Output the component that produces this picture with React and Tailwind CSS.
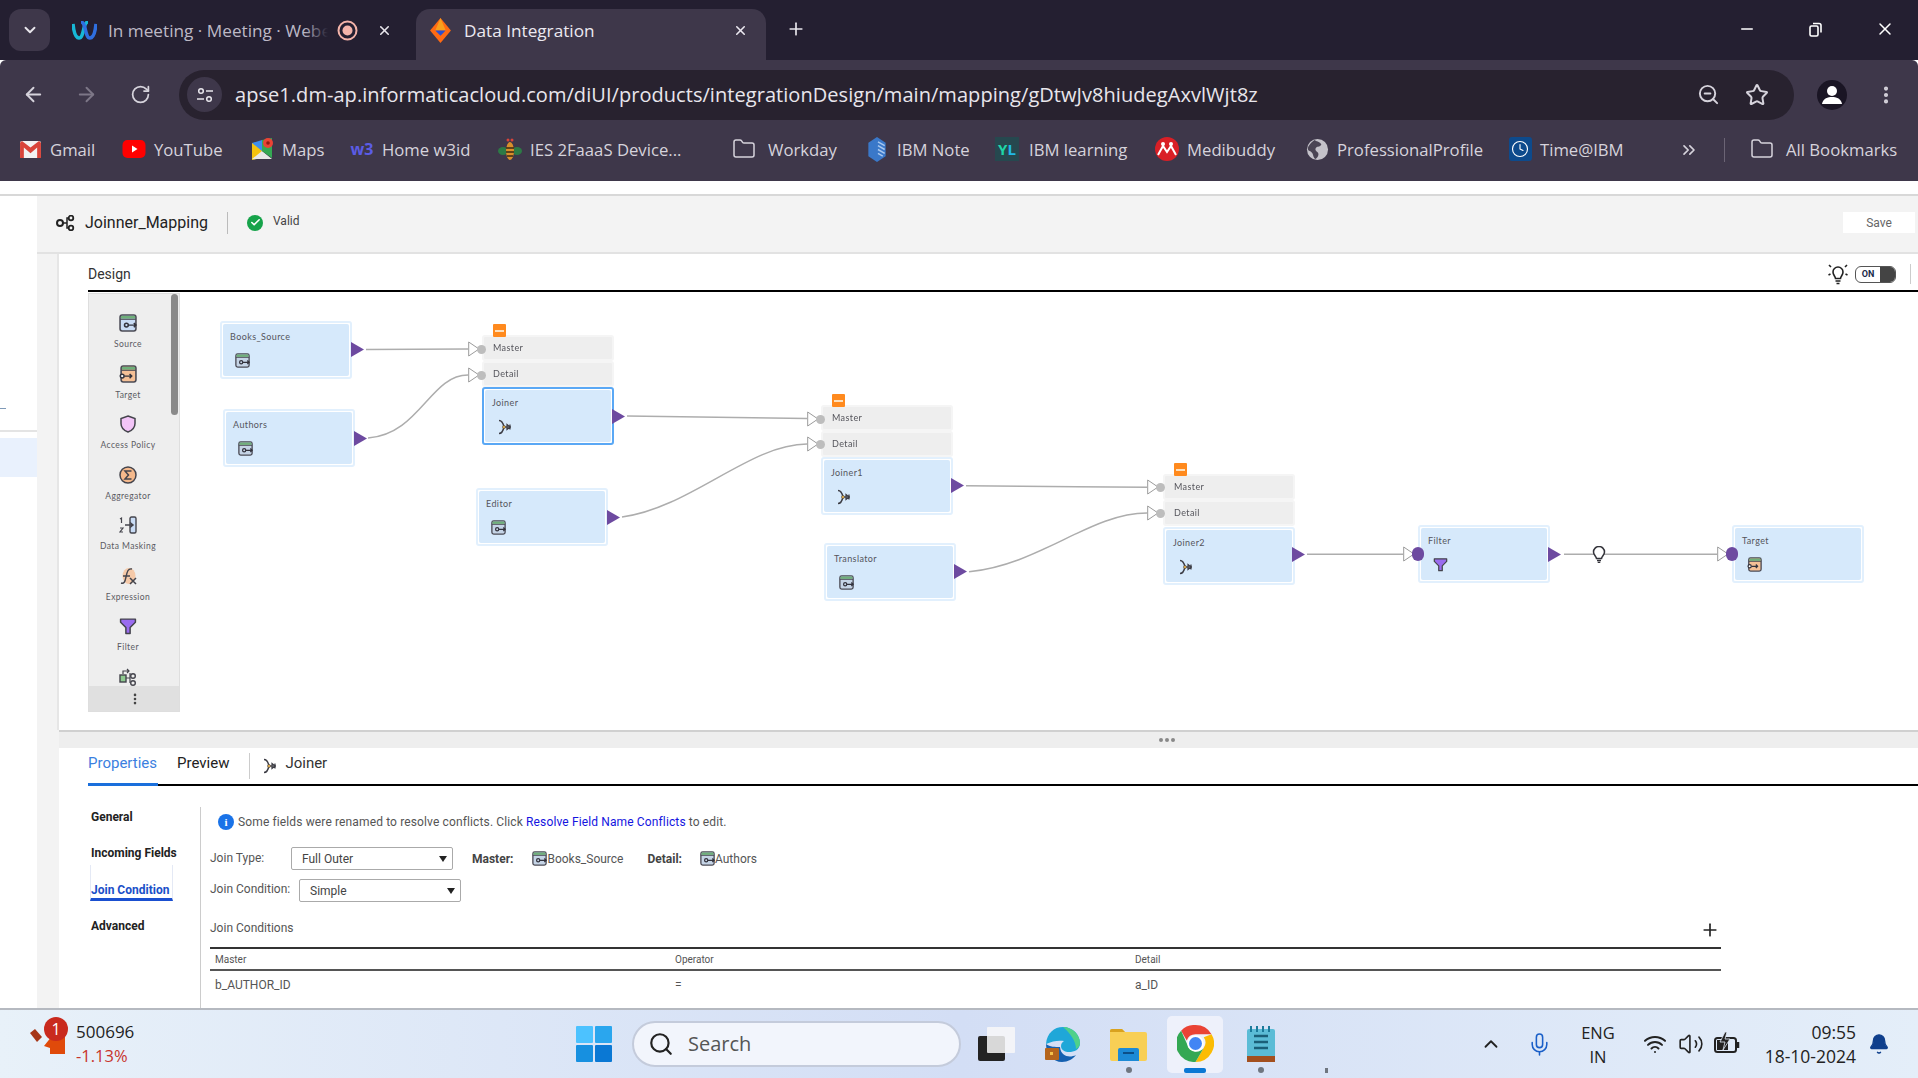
import React from "react";
import { ChevronDown, ChevronUp, X, Plus, ArrowLeft, ArrowRight, RotateCw, Search, Star, ZoomOut, Minus, EllipsisVertical, ChevronsRight, Folder, Mic, Wifi, Volume2, Bell, Check, Clock } from "lucide-react";

function Triangle({ className }) {
  return (
    <svg viewBox="0 0 13 15" className={className}>
      <path d="M0 0 L13 7.5 L0 15 Z" fill="#6d4aa0" />
    </svg>
  );
}

// source / target box icon used all over the mapping
function BoxIcon({ className, fill = "#c9dcf5" }) {
  return (
    <svg viewBox="0 0 17 17" className={className}>
      <rect x="1" y="1" width="15" height="15" rx="2" fill={fill} stroke="#4b4b55" strokeWidth="1.5" />
      <rect x="1.8" y="1.8" width="13.4" height="2.6" fill="#6fb07a" />
      <line x1="1" y1="5" x2="16" y2="5" stroke="#4b4b55" strokeWidth="1" />
      <circle cx="7" cy="10.5" r="1.8" fill="none" stroke="#33333d" strokeWidth="1.4" />
      <path d="M9 10.5h7M14 8.5l2 2-2 2" fill="none" stroke="#33333d" strokeWidth="1.4" />
    </svg>
  );
}

function TargetIcon({ className }) {
  return (
    <svg viewBox="0 0 17 17" className={className}>
      <rect x="2" y="1" width="14" height="15" rx="2" fill="#f5c096" stroke="#4b4b55" strokeWidth="1.5" />
      <rect x="2.8" y="1.8" width="12.4" height="2.6" fill="#6fb07a" />
      <line x1="2" y1="5" x2="16" y2="5" stroke="#4b4b55" strokeWidth="1" />
      <circle cx="3" cy="10.5" r="1.8" fill="#fff" stroke="#33333d" strokeWidth="1.4" />
      <path d="M5 10.5h7M10 8.5l2 2-2 2" fill="none" stroke="#33333d" strokeWidth="1.4" />
    </svg>
  );
}

function JoinerIcon({ className }) {
  return (
    <svg viewBox="0 0 16 16" className={className}>
      <path d="M2 1.5c3 0 4 2 5 6.5-1 4.5-2 6.5-5 6.5" fill="none" stroke="#3d3d45" strokeWidth="1.5" />
      <path d="M7 8h7" stroke="#3d3d45" strokeWidth="1.3" />
      <path d="M10 5.5l3 2.5-3 2.5zM13 5.500v5" fill="none" stroke="#3d3d45" strokeWidth="1.2" />
      <circle cx="7" cy="8" r="1.5" fill="#f2b84b" stroke="#3d3d45" strokeWidth="0.6" />
    </svg>
  );
}

function FilterIcon({ className }) {
  return (
    <svg viewBox="0 0 17 17" className={className}>
      <path d="M1.5 2h14v3l-5 5v5.5h-4V10l-5-5z" fill="#9a6cf0" stroke="#44444c" strokeWidth="1.4" strokeLinejoin="round" />
    </svg>
  );
}

function Port({ className, purple }) {
  return (
    <div className={`absolute flex items-center ${className}`}>
      <svg viewBox="0 0 12 16" className="w-[12px] h-[16px]">
        <path d="M0.7 1 L11 8 L0.7 15 Z" fill="#fff" stroke="#9a9a9a" strokeWidth="1" />
      </svg>
      {purple ? (
        <div className="w-[12px] h-[14px] -ml-[3px] rounded-full bg-[#6d4aa0]" />
      ) : (
        <div className="w-[9px] h-[9px] -ml-[3px] rounded-full bg-[#bdbdbd]" />
      )}
    </div>
  );
}

function MapNode({ className, name, icon, selected }) {
  return (
    <div className={`absolute w-[132px] h-[58px] rounded-[3px] border-2 bg-white p-[1px] ${selected ? "border-[#5aa8f5]" : "border-[#e2f0fd]"} ${className}`}>
      <div className="w-full h-full bg-[#d6e9fb] rounded-[2px] pl-[7px] pt-[7px] relative">
        <div className="text-[9px] leading-[11px] tracking-[0.4px] text-[#55555c]">{name}</div>
        <div className="absolute left-[12px] top-[29px]">{icon}</div>
      </div>
    </div>
  );
}

function JoinHead({ className }) {
  return (
    <div className={`absolute w-[132px] h-[52px] flex flex-col ${className}`}>
      <div className="h-[26px] rounded-[3px] bg-[#eeeeee] border-2 border-[#f5f5f5] pl-[9px] text-[9px] leading-[22px] tracking-[0.4px] text-[#55555c]">Master</div>
      <div className="h-[26px] rounded-[3px] bg-[#eeeeee] border-2 border-[#f5f5f5] pl-[9px] text-[9px] leading-[22px] tracking-[0.4px] text-[#55555c]">Detail</div>
      <div className="absolute -top-[11px] left-[11px] w-[13px] h-[13px] rounded-[1px] bg-[#ff8a1e] flex items-center justify-center">
        <div className="w-[9px] h-[2px] bg-[#fde0bd]" />
      </div>
    </div>
  );
}

const paletteItems = [
  { name: "Source", icon: <BoxIcon className="w-[18px] h-[18px]" /> },
  { name: "Target", icon: <TargetIcon className="w-[18px] h-[18px]" /> },
  {
    name: "Access Policy",
    icon: (
      <svg viewBox="0 0 18 18" className="w-[18px] h-[18px]">
        <path d="M9 1l7 2.5v5c0 4-3 7-7 8.5-4-1.5-7-4.5-7-8.5v-5z" fill="#f2c4f7" stroke="#44444c" strokeWidth="1.5" />
      </svg>
    ),
  },
  {
    name: "Aggregator",
    icon: (
      <svg viewBox="0 0 18 18" className="w-[18px] h-[18px]">
        <circle cx="9" cy="9" r="8" fill="#f5b98c" stroke="#44444c" strokeWidth="1.5" />
        <path d="M12.5 5H6l3.5 4L6 13h6.5" fill="none" stroke="#44444c" strokeWidth="1.5" />
      </svg>
    ),
  },
  {
    name: "Data Masking",
    icon: (
      <svg viewBox="0 0 18 18" className="w-[18px] h-[18px]">
        <rect x="11" y="1" width="6" height="16" rx="1.5" fill="#c9dcf5" stroke="#44444c" strokeWidth="1.4" />
        <path d="M6 9h8M11 6.5L14 9l-3 2.5" fill="none" stroke="#44444c" strokeWidth="1.5" />
        <path d="M1 3l1.5-1v5M1 12h3l-3 4h3" fill="none" stroke="#44444c" strokeWidth="1.2" />
      </svg>
    ),
  },
  {
    name: "Expression",
    icon: (
      <svg viewBox="0 0 18 18" className="w-[18px] h-[18px]">
        <ellipse cx="10" cy="9" rx="6.5" ry="8" fill="#f5c9a8" />
        <path d="M2 16c3 1 4-1 5-6s2-9 6-8" fill="none" stroke="#44444c" strokeWidth="1.4" />
        <path d="M4 9h7M11 11l6 6M17 11l-6 6" fill="none" stroke="#44444c" strokeWidth="1.5" />
      </svg>
    ),
  },
  { name: "Filter", icon: <FilterIcon className="w-[18px] h-[18px]" /> },
];

function Bookmark({ className, labelClass, icon, label }) {
  return (
    <div className={`flex items-center shrink-0 ${className}`}>
      <div className="w-[24px] h-[24px] flex items-center justify-center shrink-0">{icon}</div>
      <span className={`${labelClass || "ml-[8px]"} text-[16.7px] text-[#d6d3dc] whitespace-nowrap`}>{label}</span>
    </div>
  );
}

const bookmarks = [
  {
    label: "Gmail",
    className: "w-[104px] ml-[18px]",
    icon: (
      <svg viewBox="0 0 24 20" className="w-[23px] h-[19px]">
        <rect x="1" y="1" width="22" height="18" rx="2" fill="#f2f2f2" />
        <path d="M1 3v16h4V8l7 6 7-6v11h4V3l-2-2-9 7-9-7z" fill="#d9443a" />
      </svg>
    ),
  },
  {
    label: "YouTube",
    className: "w-[128px]",
    icon: (
      <svg viewBox="0 0 24 20" className="w-[24px] h-[20px]">
        <rect x="0.5" y="1" width="23" height="18" rx="5" fill="#f00" />
        <path d="M10 6.5l5.5 3.5-5.500 3.500z" fill="#fff" />
      </svg>
    ),
  },
  {
    label: "Maps",
    className: "w-[100px]",
    icon: (
      <svg viewBox="0 0 24 24" className="w-[24px] h-[24px]">
        <path d="M2 6l10-3v18L2 23z" fill="#3c8dee" />
        <path d="M2 6l10 8v7L2 23z" fill="#f4c20d" />
        <path d="M12 14l10 8H2z" fill="#e8e8e8" />
        <path d="M12 3l10-2v20L12 14z" fill="#34a853" />
        <circle cx="18" cy="6" r="5" fill="#ea4335" />
        <circle cx="18" cy="6" r="1.8" fill="#8e1b12" />
      </svg>
    ),
  },
  {
    label: "Home w3id",
    className: "w-[148px]",
    icon: <span className="text-[16px] font-bold text-[#5b5ce6]">w3</span>,
  },
  {
    label: "IES 2FaaaS Device...",
    className: "w-[234px]",
    icon: (
      <svg viewBox="0 0 24 24" className="w-[24px] h-[24px]">
        <ellipse cx="5" cy="14" rx="5" ry="4" fill="#2d7a46" />
        <ellipse cx="19" cy="14" rx="5" ry="4" fill="#2d7a46" />
        <ellipse cx="12" cy="14" rx="4" ry="9" fill="#d98f2b" />
        <path d="M8 11h8M8 15h8M9 19h6" stroke="#3a2a14" strokeWidth="1.5" />
        <circle cx="10" cy="3" r="1.5" fill="#d9443a" />
        <circle cx="14" cy="3" r="1.5" fill="#d9443a" />
      </svg>
    ),
  },
  {
    label: "Workday",
    className: "w-[133px]",
    labelClass: "ml-[12px]",
    icon: <Folder className="w-[24px] h-[24px] text-[#d6d3dc]" strokeWidth={1.5} />,
  },
  {
    label: "IBM Note",
    className: "w-[130px]",
    icon: (
      <svg viewBox="0 0 20 26" className="w-[20px] h-[25px]">
        <path d="M10 0l9 6v14l-9 6-9-6V6z" fill="#3a78c9" />
        <path d="M11 5l7 4M11 9l7 4M11 13l7 4M11 17l5 3" stroke="#a9c8ef" strokeWidth="1.5" />
      </svg>
    ),
  },
  {
    label: "IBM learning",
    className: "w-[160px]",
    labelClass: "ml-[10px]",
    icon: (
      <div className="w-[24px] h-[24px] bg-[#26484f] flex items-center justify-center">
        <span className="text-[15px] font-bold leading-none text-[#1fd6a8]">Y<span className="text-[#22b8e6]">L</span></span>
      </div>
    ),
  },
  {
    label: "Medibuddy",
    className: "w-[150px]",
    icon: (
      <svg viewBox="0 0 24 24" className="w-[24px] h-[24px]">
        <circle cx="12" cy="12" r="12" fill="#d91f26" />
        <path d="M3 18l5-9 4 6 4-6 5 9" fill="none" stroke="#fff" strokeWidth="2" />
        <circle cx="8" cy="7" r="2" fill="#fff" />
        <circle cx="16" cy="7" r="2" fill="#fff" />
      </svg>
    ),
  },
  {
    label: "ProfessionalProfile",
    className: "w-[203px]",
    icon: (
      <svg viewBox="0 0 24 24" className="w-[23px] h-[23px]">
        <circle cx="12" cy="12" r="11" fill="#c4c2ca" />
        <path d="M9 2c3 2 6 2 7 5-2 3-5 1-6 4s3 3 3 6-2 4-3 5c-3-2-2-5-4-7s-4-1-4-4 4-7 7-9z" fill="#4a4454" />
      </svg>
    ),
  },
  {
    label: "Time@IBM",
    className: "w-[172px]",
    icon: (
      <div className="w-[23px] h-[24px] rounded-[3px] bg-[#0d4a8c] flex items-center justify-center">
        <Clock className="w-[18px] h-[18px] text-white" strokeWidth={1.5} />
      </div>
    ),
  },
];

function TabStrip() {
  return (
    <div className="h-[60px] bg-[#241f31] flex items-end shrink-0 text-[17.2px]">
      <div className="ml-[9px] mb-[9px] w-[41px] h-[42px] rounded-[12px] bg-[#3e374a] flex items-center justify-center">
        <ChevronDown className="w-[18px] h-[18px] text-[#e8e6ec]" strokeWidth={2.5} />
      </div>
      <div className="w-[366px] h-[51px] flex items-center pl-[22px] pr-[24px] pb-[9px] shrink-0">
        <svg viewBox="0 0 25 19" className="w-[25px] h-[19px] shrink-0">
          <path d="M1 3c1 10 3 14 6 14s4-6 5-10 2-6 4-6" fill="none" stroke="#17b8d6" strokeWidth="3.5" />
          <path d="M24 3c-1 10-3 14-6 14s-4-6-5-10-2-6-4-6" fill="none" stroke="#2f6fe0" strokeWidth="3.5" />
        </svg>
        <div className="ml-[11px] mt-[2px] w-[221px] relative overflow-hidden whitespace-nowrap text-[#bdb9c6]">
          In meeting · Meeting · Webex
          <div className="absolute right-0 top-0 bottom-0 w-[24px] bg-gradient-to-r from-transparent to-[#241f31]" />
        </div>
        <svg viewBox="0 0 21 21" className="ml-[9px] w-[21px] h-[21px] shrink-0">
          <circle cx="10.5" cy="10.5" r="9" fill="none" stroke="#f4b4aa" strokeWidth="2" />
          <circle cx="10.5" cy="10.5" r="5" fill="#f4b4aa" />
        </svg>
        <X className="ml-[19px] w-[15px] h-[15px] text-[#e8e6ec] shrink-0" strokeWidth={2.5} />
      </div>
      <div className="w-[350px] h-[51px] rounded-t-[14px] bg-[#3e374a] flex items-center pl-[12px] pr-[18px] pb-[9px] shrink-0">
        <svg viewBox="0 0 24 24" className="w-[25px] h-[25px] shrink-0">
          <path d="M12 0l10 12-10 12L2 12z" fill="#ff6a13" />
          <path d="M12 0l5 12H7z" fill="#f7a01d" />
          <path d="M7 12h10l-5 5z" fill="#2a4fd0" />
        </svg>
        <span className="ml-[11px] mt-[2px] text-[#ece9f1] whitespace-nowrap">Data Integration</span>
        <X className="ml-auto w-[15px] h-[15px] text-[#ece9f1]" strokeWidth={2.5} />
      </div>
      <Plus className="ml-[20px] mb-[21px] w-[20px] h-[20px] text-[#e8e6ec]" strokeWidth={2} />
      <div className="ml-auto flex items-center h-[60px] pb-[2px]">
        <Minus className="w-[18px] h-[18px] text-white" strokeWidth={2} />
        <svg viewBox="0 0 15 15" className="ml-[52px] w-[15px] h-[15px]">
          <rect x="2" y="4" width="8" height="10" rx="1.5" fill="none" stroke="#fff" strokeWidth="1.6" />
          <path d="M5 1.5h6a2 2 0 0 1 2 2v7" fill="none" stroke="#fff" strokeWidth="1.6" />
        </svg>
        <X className="ml-[52px] mr-[23px] w-[20px] h-[20px] text-white" strokeWidth={1.8} />
      </div>
    </div>
  );
}

function Toolbar() {
  return (
    <div className="h-[60px] bg-[#3e374a] flex items-center shrink-0 rounded-t-[6px] pt-[10px] pb-[1px]">
      <ArrowLeft className="ml-[22px] w-[23px] h-[23px] text-[#d6d3dc]" strokeWidth={2} />
      <ArrowRight className="ml-[30px] w-[23px] h-[23px] text-[#7d7787]" strokeWidth={2} />
      <RotateCw className="ml-[32px] w-[21px] h-[21px] text-[#d6d3dc]" strokeWidth={2} />
      <div className="ml-[28px] w-[1615px] h-[50px] rounded-full bg-[#28222f] flex items-center pl-[8px] pr-[25px]">
        <div className="w-[35px] h-[35px] rounded-full bg-[#3e374a] flex items-center justify-center">
          <svg viewBox="0 0 18 18" className="w-[18px] h-[18px]">
            <circle cx="5" cy="5" r="2.3" fill="none" stroke="#e8e6ec" strokeWidth="1.5" />
            <path d="M10 5h7M1 13h7" stroke="#e8e6ec" strokeWidth="1.5" />
            <circle cx="13" cy="13" r="2.3" fill="none" stroke="#e8e6ec" strokeWidth="1.5" />
          </svg>
        </div>
        <span className="ml-[13px] text-[20px] text-[#e8e6ec] whitespace-nowrap tracking-[0.05px]">apse1.dm-ap.informaticacloud.com/diUI/products/integrationDesign/main/mapping/gDtwJv8hiudegAxvlWjt8z</span>
        <ZoomOut className="ml-auto w-[23px] h-[23px] text-[#d6d3dc]" strokeWidth={2} />
        <Star className="ml-[25px] w-[24px] h-[24px] text-[#d6d3dc]" strokeWidth={2} />
      </div>
      <div className="ml-[23px] w-[30px] h-[30px] rounded-full bg-[#1a1524] flex items-center justify-center overflow-hidden">
        <svg viewBox="0 0 30 30" className="w-[30px] h-[30px]">
          <circle cx="15" cy="11" r="5" fill="#fff" />
          <path d="M5 24c1-6 6-7 10-7s9 1 10 7z" fill="#fff" />
        </svg>
      </div>
      <EllipsisVertical className="ml-[28px] w-[22px] h-[22px] text-[#d6d3dc]" strokeWidth={2.5} />
    </div>
  );
}

function BookmarkBar() {
  return (
    <div className="h-[61px] bg-[#3e374a] flex items-center shrink-0 pb-[2px]">
      {bookmarks.map((b) => (
        <Bookmark key={b.label} {...b} />
      ))}
      <ChevronsRight className="-ml-[1px] w-[20px] h-[20px] text-[#d6d3dc]" strokeWidth={2} />
      <div className="ml-[25px] w-[1px] h-[24px] bg-[#6b6475]" />
      <div className="ml-[25px] flex items-center">
        <Folder className="w-[24px] h-[24px] text-[#d6d3dc]" strokeWidth={1.5} />
        <span className="ml-[12px] text-[16.7px] text-[#d6d3dc] whitespace-nowrap">All Bookmarks</span>
      </div>
    </div>
  );
}

function Palette() {
  return (
    <div className="absolute left-[29px] top-[1px] w-[92px] h-[419px] bg-[#eeeeee] border border-[#dedede] overflow-hidden">
      <div className="flex flex-col items-center w-[78px] pt-[20px]">
        {paletteItems.map((p) => (
          <div key={p.name} className="h-[50.5px] flex flex-col items-center shrink-0">
            {p.icon}
            <span className="mt-[6px] text-[8.5px] leading-[12px] tracking-[0.4px] text-[#5a5a62] whitespace-nowrap">{p.name}</span>
          </div>
        ))}
        <svg viewBox="0 0 18 18" className="w-[18px] h-[18px] shrink-0">
          <rect x="1" y="7" width="6" height="7" fill="#8ec98f" stroke="#44444c" strokeWidth="1.4" />
          <path d="M4 6V3h6M8 1l2 2-2 2M7 10h4M11 5v10" fill="none" stroke="#44444c" strokeWidth="1.2" />
          <circle cx="14" cy="8" r="2.3" fill="none" stroke="#44444c" strokeWidth="1.4" />
          <circle cx="14" cy="15" r="2.3" fill="none" stroke="#44444c" strokeWidth="1.4" />
        </svg>
      </div>
      <div className="absolute left-0 right-0 bottom-0 h-[25px] bg-[#e0e0e0] flex items-center justify-center pl-[2px]">
        <EllipsisVertical className="w-[14px] h-[14px] text-[#444]" strokeWidth={2.5} />
      </div>
      <div className="absolute right-[1px] top-0 w-[7px] h-[121px] rounded-full bg-[#8a8a8a]" />
    </div>
  );
}

function Canvas() {
  const boxIcon = <BoxIcon className="w-[15px] h-[15px]" fill="#c5d4e6" />;
  const joiner = <JoinerIcon className="w-[16px] h-[16px]" />;
  return (
    <div className="relative flex-1 blur-[0.35px] text-[#4a4a52] font-['Lato',sans-serif]">
      <Palette />

      {/* edges, drawn in page coordinates minus the canvas origin (59,292) */}
      <svg className="absolute left-0 top-0 w-[1859px] h-[438px]" viewBox="59 292 1859 438" fill="none">
        <g stroke="#adadad" strokeWidth="1.5">
          <path d="M366 349.5 L468 349" />
          <path d="M368 438 C420 434 430 375 468 375" />
          <path d="M627 416 L807 418.5" />
          <path d="M622 517 C690 508 750 444 807 444" />
          <path d="M966 485.7 L1147 487.3" />
          <path d="M969 571.7 C1040 565 1090 513 1147 513" />
          <path d="M1307 554.3 L1403 554.3" />
          <path d="M1564 554.3 L1717 554.3" />
        </g>
      </svg>

      <MapNode className="left-[161px] top-[29px]" name="Books_Source" icon={boxIcon} />
      <MapNode className="left-[164px] top-[117px]" name="Authors" icon={boxIcon} />
      <MapNode className="left-[417px] top-[196px]" name="Editor" icon={boxIcon} />
      <MapNode className="left-[765px] top-[251px]" name="Translator" icon={boxIcon} />

      <JoinHead className="left-[423px] top-[43px]" />
      <MapNode className="left-[423px] top-[95px]" name="Joiner" icon={joiner} selected />
      <JoinHead className="left-[762px] top-[113px]" />
      <MapNode className="left-[762px] top-[165px]" name="Joiner1" icon={joiner} />
      <JoinHead className="left-[1104px] top-[182px]" />
      <MapNode className="left-[1104px] top-[235px]" name="Joiner2" icon={joiner} />

      <MapNode className="left-[1359px] top-[233px]" name="Filter" icon={<FilterIcon className="w-[15px] h-[15px]" />} />
      <MapNode className="left-[1673px] top-[233px]" name="Target" icon={<TargetIcon className="w-[15px] h-[15px]" />} />

      <Triangle className="absolute left-[292px] top-[50px] w-[13px] h-[15px]" />
      <Triangle className="absolute left-[295px] top-[139px] w-[13px] h-[15px]" />
      <Triangle className="absolute left-[548px] top-[218px] w-[13px] h-[15px]" />
      <Triangle className="absolute left-[553px] top-[117px] w-[13px] h-[15px]" />
      <Triangle className="absolute left-[892px] top-[186px] w-[13px] h-[15px]" />
      <Triangle className="absolute left-[895px] top-[272px] w-[13px] h-[15px]" />
      <Triangle className="absolute left-[1233px] top-[255px] w-[13px] h-[15px]" />
      <Triangle className="absolute left-[1489px] top-[255px] w-[13px] h-[15px]" />

      <Port className="left-[409px] top-[49px]" />
      <Port className="left-[409px] top-[75px]" />
      <Port className="left-[748px] top-[119px]" />
      <Port className="left-[748px] top-[144px]" />
      <Port className="left-[1088px] top-[187px]" />
      <Port className="left-[1088px] top-[213px]" />
      <Port className="left-[1344px] top-[254px]" purple />
      <Port className="left-[1658px] top-[254px]" purple />

      <svg viewBox="0 0 14 17" className="absolute left-[1533px] top-[254px] w-[14px] h-[17px]">
        <path d="M4.5 12.5C4 10 1.5 9 1.5 6a5.500 5.500 0 0 1 11 0c0 3-2.500 4-3 6.500z" fill="#fff" stroke="#33333a" strokeWidth="1.5" />
        <path d="M5 14.5h4M5.7 16.3h2.6" stroke="#33333a" strokeWidth="1.3" />
      </svg>
    </div>
  );
}

function PropertiesPanel() {
  return (
    <div className="h-[260px] bg-white pl-[29px] flex flex-col overflow-hidden font-['Roboto',sans-serif]">
      <div className="h-[38px] border-b-2 border-black flex text-[15px] shrink-0">
        <div className="w-[70px] border-b-[3px] -mb-[2px] h-[38px] border-[#1a6fdc] text-[#3b7fe0] pt-[4px] whitespace-nowrap">Properties</div>
        <div className="ml-[19px] pt-[4px] text-[#222]">Preview</div>
        <div className="ml-[20px] mt-[5px] w-[1px] h-[26px] bg-[#ccc]" />
        <JoinerIcon className="ml-[12px] mt-[10px] w-[16px] h-[16px]" />
        <div className="ml-[7px] pt-[4px] text-[#333]">Joiner</div>
      </div>
      <div className="flex flex-1 min-h-0">
        <div className="w-[113px] border-r border-[#ccc] mt-[21px] shrink-0 text-[12px] font-bold text-[#222] pl-[3px]">
          <div className="h-[14px] leading-[14px] mt-[3px]">General</div>
          <div className="h-[14px] leading-[14px] mt-[22px]">Incoming Fields</div>
          <div className="ml-[-1px] mt-[5px] w-[83px] h-[36px] pt-[18px] border-x border-[#e4e9f5] border-b-[3px] border-b-[#1a4fd0] text-[#1a4fc8] leading-[14px] whitespace-nowrap">Join Condition</div>
          <div className="h-[14px] leading-[14px] mt-[18px]">Advanced</div>
        </div>
        <div className="flex-1 pl-[9px] pr-[197px] text-[12px] text-[#555]">
          <div className="mt-[28px] h-[16px] flex items-center pl-[8px]">
            <div className="w-[16px] h-[16px] rounded-full bg-[#1a73e8] flex items-center justify-center text-white text-[11px] font-bold font-['Liberation_Serif',serif] shrink-0">i</div>
            <span className="ml-[4px] whitespace-nowrap tracking-[0.13px]">
              Some fields were renamed to resolve conflicts. Click <span className="text-[#1414e0]">Resolve Field Name Conflicts</span> to edit.
            </span>
          </div>
          <div className="mt-[17px] h-[23px] flex items-center">
            <span className="w-[81px] -mt-[1px]">Join Type:</span>
            <div className="w-[162px] h-[23px] border border-[#aaa] rounded-[2px] flex items-center pl-[10px] pr-[5px] text-[#444]">
              Full Outer
              <span className="ml-auto w-0 h-0 border-x-[4px] border-x-transparent border-t-[6px] border-t-[#222]" />
            </div>
            <span className="ml-[19px] font-bold text-[#444]">Master:</span>
            <BoxIcon className="ml-[19px] w-[15px] h-[15px]" fill="#c5d4e6" />
            <span>Books_Source</span>
            <span className="ml-[24px] font-bold text-[#444]">Detail:</span>
            <BoxIcon className="ml-[18px] w-[15px] h-[15px]" fill="#c5d4e6" />
            <span>Authors</span>
          </div>
          <div className="mt-[9px] h-[23px] flex items-center">
            <span className="w-[89px] -mt-[4px] whitespace-nowrap">Join Condition:</span>
            <div className="w-[162px] h-[23px] border border-[#aaa] rounded-[2px] flex items-center pl-[10px] pr-[5px] text-[#444]">
              Simple
              <span className="ml-auto w-0 h-0 border-x-[4px] border-x-transparent border-t-[6px] border-t-[#222]" />
            </div>
          </div>
          <div className="mt-[17px] h-[18px] flex items-center justify-between">
            <span>Join Conditions</span>
            <Plus className="mr-[1px] mt-[3px] w-[20px] h-[20px] text-[#222]" strokeWidth={2} />
          </div>
          <div className="mt-[10px] border-t-2 border-[#333] border-b-2 border-b-[#555] h-[24px] grid grid-cols-[460px_460px_1fr] pl-[5px] items-center text-[10px] text-[#555]">
            <span>Master</span>
            <span>Operator</span>
            <span>Detail</span>
          </div>
          <div className="h-[28px] grid grid-cols-[460px_460px_1fr] pl-[5px] items-center text-[#555]">
            <span>b_AUTHOR_ID</span>
            <span>=</span>
            <span>a_ID</span>
          </div>
        </div>
      </div>
    </div>
  );
}

function Taskbar() {
  return (
    <div className="h-[70px] shrink-0 border-t-2 border-[#b5b9c0] bg-gradient-to-r from-[#e8f1f9] via-[#d3def5] to-[#e4eef9] flex items-center relative font-['Open_Sans',sans-serif]">
      <div className="ml-[30px] w-[36px] h-[52px] relative shrink-0">
        <svg viewBox="0 0 36 30" className="absolute left-0 top-[6px] w-[36px] h-[30px]">
          <path d="M0 9l5-4 7 8-5 5z" fill="#a63516" />
          <path d="M14 22l8-10h13v18H20v-6z" fill="#e04a0a" />
        </svg>
        <div className="absolute left-[14px] -top-[1px] w-[24px] h-[24px] rounded-full bg-[#c92a1e] text-white text-[16px] leading-[24px] text-center">1</div>
      </div>
      <div className="ml-[10px] w-[69px] flex flex-col shrink-0">
        <span className="text-[17px] leading-[24px] text-[#222]">500696</span>
        <span className="text-[16.5px] leading-[24px] text-[#c8342b]">-1.13%</span>
      </div>
      <svg viewBox="0 0 36 36" className="ml-[431px] w-[36px] h-[36px] shrink-0">
        <rect x="0" y="0" width="17" height="17" rx="1" fill="#4cc2ff" />
        <rect x="19" y="0" width="17" height="17" rx="1" fill="#2aa6ee" />
        <rect x="0" y="19" width="17" height="17" rx="1" fill="#1790e0" />
        <rect x="19" y="19" width="17" height="17" rx="1" fill="#0a78d4" />
      </svg>
      <div className="ml-[20px] w-[329px] h-[46px] rounded-full bg-[#f2f5fc] border-2 border-[#c4cbdb] flex items-center pl-[14px] shrink-0">
        <Search className="w-[26px] h-[26px] text-[#222]" strokeWidth={2} />
        <span className="ml-[14px] text-[20px] text-[#555]">Search</span>
      </div>
      <svg viewBox="0 0 37 34" className="ml-[17px] w-[37px] h-[34px] shrink-0">
        <rect x="0" y="9" width="27" height="25" rx="2" fill="#232323" />
        <rect x="9" y="0" width="28" height="26" rx="1" fill="#f8f8f8" fillOpacity="0.85" />
      </svg>
      <svg viewBox="0 0 37 37" className="ml-[29px] w-[37px] h-[37px] shrink-0">
        <path d="M2 18C3 7 10 1 19 1c10 0 17 8 17 16 0 7-6 9-11 9-4 0-8-2-8-6 0-3 2-4 3-5-5-1-12 0-18 3z" fill="#1fa7d8" />
        <path d="M19 1c10 0 17 8 17 16 0 3-2 5-4 6 0-8-6-16-13-22z" fill="#4fd18a" />
        <path d="M2 18c0 10 7 18 16 18 6 0 11-3 14-7-6 3-15 2-16-8-5 0-10 0-14-3z" fill="#1560b0" />
        <rect x="1" y="22" width="14" height="12" rx="1" fill="#b5651d" />
        <rect x="6" y="26" width="3" height="3" fill="#f3c14b" />
      </svg>
      <svg viewBox="0 0 37 33" className="ml-[29px] w-[37px] h-[33px] shrink-0">
        <path d="M0 3a2 2 0 0 1 2-2h10l3 3h20a2 2 0 0 1 2 2v25a2 2 0 0 1-2 2H2a2 2 0 0 1-2-2z" fill="#f8cf55" />
        <path d="M0 3a2 2 0 0 1 2-2h10l3 3h-15z" fill="#d9a21f" />
        <path d="M8 22a2 2 0 0 1 2-2h17a2 2 0 0 1 2 2v11H8z" fill="#1c8ad6" />
        <rect x="13" y="24" width="11" height="2" fill="#0c4f88" />
      </svg>
      <div className="ml-[20px] w-[56px] h-[57px] rounded-[5px] bg-[#eef1fb] relative flex items-center justify-center shrink-0">
        <svg viewBox="0 0 36 36" className="w-[37px] h-[37px] -mt-[2px]">
          <path d="M18 0a18 18 0 0 1 15.6 9H18a9 9 0 0 0-8.5 6L4 5.5A18 18 0 0 1 18 0z" fill="#ea4335" />
          <path d="M33.6 9A18 18 0 0 1 18 36l7.8-13.5A9 9 0 0 0 26 12z" fill="#fbbc04" />
          <path d="M4 5.5A18 18 0 0 0 18 36l7.8-13.5a9 9 0 0 1-15.6-3z" fill="#34a853" />
          <circle cx="18" cy="18" r="8" fill="#fff" />
          <circle cx="18" cy="18" r="6.3" fill="#4285f4" />
        </svg>
        <div className="absolute bottom-0 left-[17px] w-[22px] h-[5px] rounded-[2px] bg-[#0a78d4]" />
      </div>
      <svg viewBox="0 0 28 36" className="ml-[24px] w-[28px] h-[36px] shrink-0">
        <rect x="0" y="3" width="28" height="30" rx="2" fill="#5bbcd6" />
        <rect x="0" y="30" width="28" height="6" fill="#a3501f" />
        <path d="M7 10h14M7 16h14M7 22h14" stroke="#1b5f78" strokeWidth="2.5" />
        <path d="M4 0v6M10 0v6M16 0v6M22 0v6" stroke="#1b7a9a" strokeWidth="2" />
      </svg>
      <ChevronUp className="ml-[205px] w-[22px] h-[22px] text-[#222] shrink-0" strokeWidth={2} />
      <Mic className="ml-[25px] w-[25px] h-[25px] text-[#1a5fc8] shrink-0" strokeWidth={1.5} />
      <div className="ml-[26px] w-[40px] pt-[2px] flex flex-col items-center text-[16.5px] leading-[24px] text-[#222] shrink-0">
        <span>ENG</span>
        <span>IN</span>
      </div>
      <Wifi className="ml-[25px] w-[24px] h-[24px] text-[#222] shrink-0" strokeWidth={2} />
      <Volume2 className="ml-[11px] w-[26px] h-[26px] text-[#222] shrink-0" strokeWidth={1.5} />
      <svg viewBox="0 0 26 22" className="ml-[10px] w-[26px] h-[22px] -mt-[2px] shrink-0">
        <rect x="1" y="6" width="21" height="14" rx="2.5" fill="none" stroke="#222" strokeWidth="2" />
        <rect x="3" y="8" width="11" height="10" fill="#222" />
        <path d="M24 10v6" stroke="#222" strokeWidth="2.5" />
        <path d="M11 0L6 10h5l-2 8 7-11h-5l2-7z" fill="#222" stroke="#e4eef9" strokeWidth="0.8" />
      </svg>
      <div className="ml-[18px] w-[98px] flex flex-col items-end text-[17.5px] leading-[24px] text-[#222] shrink-0">
        <span>09:55</span>
        <span className="whitespace-nowrap">18-10-2024</span>
      </div>
      <Bell className="ml-[12px] w-[22px] h-[24px] text-[#0f3f8c] fill-[#0f3f8c] shrink-0" strokeWidth={1.5} />

      {/* running app dots under the taskbar buttons */}
      <div className="absolute left-[1126px] bottom-[5px] w-[6px] h-[6px] rounded-full bg-[#6f7680]" />
      <div className="absolute left-[1258px] bottom-[5px] w-[6px] h-[6px] rounded-full bg-[#6f7680]" />
      <div className="absolute left-[1325px] bottom-[5px] w-[3px] h-[5px] bg-[#6f7680]" />
    </div>
  );
}

export default function App() {
  return (
    <div className="w-[1918px] h-[1078px] overflow-hidden flex flex-col bg-white font-['Open_Sans',sans-serif]">
      <TabStrip />
      <Toolbar />
      <BookmarkBar />

      <div className="h-[15px] shrink-0 bg-white border-b-2 border-[#d8d8d8]" />

      <div className="flex-1 min-h-0 flex">
        {/* collapsed app nav */}
        <div className="w-[37px] shrink-0 bg-white flex flex-col">
          <div className="mt-[212px] w-[6px] h-[1px] bg-[#7f9ab8]" />
          <div className="mt-[21px] w-full h-[2px] bg-[#e4e4e4]" />
          <div className="mt-[6px] h-[39px] w-full bg-[#e9f1fd]" />
        </div>

        <div className="flex-1 min-w-0 flex flex-col bg-[#f3f3f3] font-['Roboto',sans-serif]">
          <div className="h-[58px] shrink-0 flex items-center pl-[19px] pb-[3px] border-b-2 border-[#e2e2e2]">
            <svg viewBox="0 0 20 16" className="w-[20px] h-[16px] shrink-0">
              <circle cx="4" cy="8" r="3" fill="none" stroke="#222" strokeWidth="2" />
              <circle cx="15" cy="3" r="2.3" fill="none" stroke="#222" strokeWidth="1.8" />
              <circle cx="15" cy="13" r="2.3" fill="none" stroke="#222" strokeWidth="1.8" />
              <path d="M7 8h4V3h2M11 8v5h2" fill="none" stroke="#222" strokeWidth="1.5" />
            </svg>
            <span className="ml-[9px] text-[16px] text-[#222] whitespace-nowrap">Joinner_Mapping</span>
            <div className="ml-[19px] w-[1px] h-[22px] bg-[#bbb]" />
            <div className="ml-[19px] w-[16px] h-[16px] rounded-full bg-[#16a34a] flex items-center justify-center">
              <Check className="w-[11px] h-[11px] text-white" strokeWidth={3.5} />
            </div>
            <span className="ml-[10px] -mt-[3px] text-[12px] text-[#444]">Valid</span>
            <div className="ml-auto mr-[3px] w-[72px] h-[21px] bg-white text-[12px] leading-[22px] text-center text-[#666]">Save</div>
          </div>

          <div className="ml-[20px] border-l-2 border-[#e6e6e6] h-[476px] shrink-0 bg-white flex flex-col">
            <div className="h-[38px] shrink-0 ml-[29px] border-b-2 border-black flex items-center text-[14px] text-[#333] pt-[4px]">
              <span>Design</span>
              <svg viewBox="0 0 22 22" className="ml-auto w-[22px] h-[22px]" fill="none" stroke="#222" strokeWidth="1.6">
                <path d="M8.500 15.500c-.3-2.500-2.500-3.500-2.500-6.500a5 5 0 0 1 10 0c0 3-2.200 4-2.500 6.500z" />
                <path d="M8.500 18h5M9.500 20.500h3M2 2l2 2M20 2l-2 2M1.500 12l2-1M20.500 12l-2-1" />
              </svg>
              <div className="ml-[6px] w-[41px] h-[17px] rounded-[6px] border border-[#555] bg-white flex overflow-hidden">
                <span className="w-[24px] text-[9px] leading-[15px] text-center font-bold text-[#1a2a4a]">ON</span>
                <div className="flex-1 bg-[#444]" />
              </div>
              <div className="ml-[14px] mr-[7px] w-[1px] h-[20px] bg-[#ccc]" />
            </div>
            <Canvas />
          </div>

          <div className="ml-[22px] h-[18px] shrink-0 bg-[#eeeeee] border-t-2 border-[#d0d0d0] flex items-center gap-[2px] pl-[1100px]">
            <div className="w-[4px] h-[4px] rounded-full bg-[#888]" />
            <div className="w-[4px] h-[4px] rounded-full bg-[#888]" />
            <div className="w-[4px] h-[4px] rounded-full bg-[#888]" />
          </div>

          <div className="ml-[22px]">
            <PropertiesPanel />
          </div>
        </div>
      </div>

      <Taskbar />
    </div>
  );
}
